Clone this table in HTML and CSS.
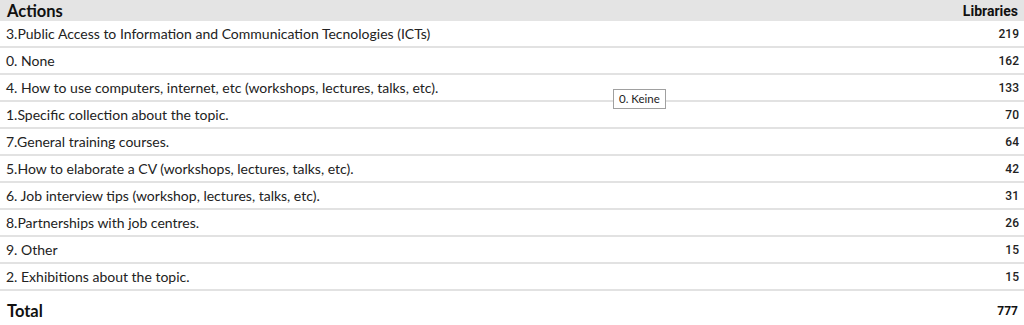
FILE: index.html
```html
<!DOCTYPE html>
<html>
<head>
<meta charset="utf-8">
<link rel="stylesheet" href="styles.css">
</head>
<body>
<div class="table">
  <div class="head">
    <span class="h-left">Actions</span>
    <span class="h-right">Libraries</span>
  </div>
  <div class="row"><span class="label">3.Public Access to Information and Communication Tecnologies (ICTs)</span><span class="num">219</span></div>
  <div class="row"><span class="label">0. None</span><span class="num">162</span></div>
  <div class="row tipped"><span class="label">4. How to use computers, internet, etc (workshops, lectures, talks, etc).</span><span class="num">133</span><span class="tooltip">0. Keine</span></div>
  <div class="row"><span class="label">1.Specific collection about the topic.</span><span class="num">70</span></div>
  <div class="row"><span class="label">7.General training courses.</span><span class="num">64</span></div>
  <div class="row"><span class="label">5.How to elaborate a CV (workshops, lectures, talks, etc).</span><span class="num">42</span></div>
  <div class="row"><span class="label">6. Job interview tips (workshop, lectures, talks, etc).</span><span class="num">31</span></div>
  <div class="row"><span class="label">8.Partnerships with job centres.</span><span class="num">26</span></div>
  <div class="row"><span class="label">9. Other</span><span class="num">15</span></div>
  <div class="row"><span class="label">2. Exhibitions about the topic.</span><span class="num">15</span></div>
  <div class="total"><span class="t-left">Total</span><span class="t-right">777</span></div>
</div>
</body>
</html>
```
FILE: styles.css
```css
html, body {
  margin: 0;
  padding: 0;
  background: #ffffff;
}
body {
  font-family: "Lato", "Open Sans", sans-serif;
  color: #222;
}
.table {
  width: 1024px;
  display: flex;
  flex-direction: column;
}
.head {
  height: 21px;
  background: #e4e4e4;
  display: flex;
  justify-content: space-between;
  align-items: center;
  padding: 0 6px 0 7px;
  font-weight: bold;
  font-size: 16.5px;
  color: #111;
}
.h-right {
  font-family: "Roboto", sans-serif;
  font-weight: bold;
  font-size: 14px;
}
.row {
  height: 25px;
  border-bottom: 2px solid #e2e2e2;
  display: flex;
  justify-content: space-between;
  align-items: center;
  padding: 0 5px 0 6px;
  font-size: 14px;
  position: relative;
}
.num {
  font-family: "Roboto", sans-serif;
  font-size: 12px;
  font-weight: 500;
}
.tooltip {
  position: absolute;
  left: 613px;
  top: 14px;
  padding: 1px 5px;
  border: 1px solid #a0a0a0;
  background: #fff;
  font-size: 11.5px;
  line-height: 16px;
  color: #222;
}
.total {
  height: 40px;
  display: flex;
  justify-content: space-between;
  align-items: center;
  padding: 0 6px 0 7px;
  font-weight: bold;
  font-size: 16.5px;
  color: #111;
}
.t-right {
  font-family: "Roboto", sans-serif;
  font-size: 12px;
  font-weight: bold;
}
```
